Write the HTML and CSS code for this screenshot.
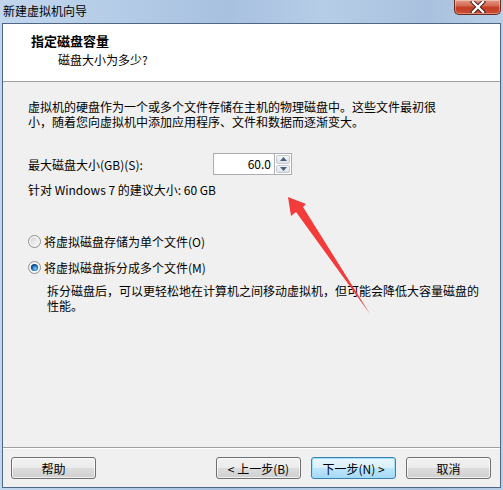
FILE: index.html
```html
<!DOCTYPE html>
<html lang="zh-CN">
<head>
<meta charset="utf-8">
<title>新建虚拟机向导</title>
<link rel="stylesheet" href="styles.css">
</head>
<body>
<div class="window">
  <div class="titlebar">
    <span class="title">新建虚拟机向导</span>
    <div class="close">
      <svg width="16" height="12" viewBox="0 0 16 12"><path d="M3 1 L13 11 M13 1 L3 11" stroke="#3d1a14" stroke-width="4.2" stroke-linecap="square"/><path d="M3 1 L13 11 M13 1 L3 11" stroke="#ffffff" stroke-width="2.4" stroke-linecap="square"/></svg>
    </div>
  </div>
  <div class="client">
    <div class="header">
      <div class="h-title">指定磁盘容量</div>
      <div class="h-sub">磁盘大小为多少?</div>
    </div>
    <div class="body">
      <p class="para">虚拟机的硬盘作为一个或多个文件存储在主机的物理磁盘中。这些文件最初很<br>小，随着您向虚拟机中添加应用程序、文件和数据而逐渐变大。</p>
      <div class="size-row">
        <span class="size-label">最大磁盘大小(GB)(S):</span>
        <div class="spin">
          <div class="spin-input">60.0</div>
          <div class="spin-btns">
            <div class="spin-btn"><svg width="7" height="4" viewBox="0 0 7 4"><path d="M0 4 L3.5 0 L7 4 Z" fill="#4a5f82"/></svg></div>
            <div class="spin-btn"><svg width="7" height="4" viewBox="0 0 7 4"><path d="M0 0 L7 0 L3.5 4 Z" fill="#4a5f82"/></svg></div>
          </div>
        </div>
      </div>
      <div class="rec">针对 Windows 7 的建议大小: 60 GB</div>
      <div class="radio-row first">
        <svg class="radio" width="13" height="13" viewBox="0 0 13 13">
          <defs><linearGradient id="rg1" x1="0" y1="0" x2="1" y2="1"><stop offset="0" stop-color="#d4d4d4"/><stop offset="1" stop-color="#fafafa"/></linearGradient></defs>
          <circle cx="6.5" cy="6.5" r="6" fill="#f4f4f4" stroke="#8e8f8f"/>
          <circle cx="6.5" cy="6.5" r="4" fill="url(#rg1)"/>
        </svg>
        <span>将虚拟磁盘存储为单个文件(O)</span>
      </div>
      <div class="radio-row second">
        <svg class="radio" width="13" height="13" viewBox="0 0 13 13">
          <defs><radialGradient id="rg2" cx="0.6" cy="0.65" r="0.6"><stop offset="0" stop-color="#8fd3fb"/><stop offset="0.5" stop-color="#2a85c9"/><stop offset="1" stop-color="#0b3f74"/></radialGradient></defs>
          <circle cx="6.5" cy="6.5" r="6" fill="#f4f4f4" stroke="#8e8f8f"/>
          <circle cx="6.5" cy="6.5" r="3.6" fill="url(#rg2)"/>
        </svg>
        <span>将虚拟磁盘拆分成多个文件(M)</span>
      </div>
      <p class="desc">拆分磁盘后，可以更轻松地在计算机之间移动虚拟机，但可能会降低大容量磁盘的<br>性能。</p>
    </div>
    <div class="footer">
      <button class="btn help">帮助</button>
      <button class="btn">&lt; 上一步(B)</button>
      <button class="btn default">下一步(N) &gt;</button>
      <button class="btn">取消</button>
    </div>
  </div>
  <svg class="arrow" width="503" height="490" viewBox="0 0 503 490">
    <polygon points="288,197 291,216 296,212 370,314 303,207 306,204" fill="#f43b3b"/>
  </svg>
</div>
</body>
</html>
```
FILE: styles.css
```css
* { box-sizing: border-box; }
html, body {
  margin: 0;
  padding: 0;
  width: 503px;
  height: 490px;
  overflow: hidden;
}
body {
  font-family: "Noto Sans CJK SC", "Liberation Sans", sans-serif;
  font-size: 12px;
  line-height: 15px;
  color: #000;
}
.window {
  position: relative;
  width: 503px;
  height: 490px;
  display: flex;
  flex-direction: column;
  padding: 0 2px 2px 2px;
  background: linear-gradient(to right, #c2d7ee 0%, #b3cbe6 25%, #a8c1df 45%, #b6cde7 65%, #a9c1de 85%, #b9cfe8 100%);
}
.titlebar {
  height: 23px;
  display: flex;
  align-items: flex-start;
  flex-shrink: 0;
}
.title {
  padding-left: 1px;
  padding-top: 3px;
  font-size: 12px;
  line-height: 15px;
  color: #000;
}
.close {
  margin-left: auto;
  width: 47px;
  height: 15px;
  border: 1px solid #6a2a1e;
  border-top: none;
  border-radius: 0 0 5px 5px;
  background: linear-gradient(to bottom, #e39a86 0%, #d46a52 40%, #c03d22 55%, #cf4e33 100%);
  display: flex;
  align-items: center;
  justify-content: center;
  box-shadow: inset 0 0 0 1px rgba(255,255,255,0.35);
}
.client {
  flex: 1;
  display: flex;
  flex-direction: column;
  border: 1px solid #4f6685;
  background: #f0f0f0;
}
.header {
  height: 58px;
  flex-shrink: 0;
  background: #fff;
  border-bottom: 1px solid #a0a0a0;
  padding-top: 9px;
}
.h-title {
  padding-left: 28px;
  font-weight: bold;
  font-size: 13px;
  line-height: 15px;
}
.h-sub {
  padding-left: 55px;
  margin-top: 4px;
}
.body {
  flex: 1;
  padding: 17px 0 0 25px;
}
.para {
  margin: 0;
  white-space: nowrap;
}
.size-row {
  display: flex;
  align-items: center;
  margin-top: 24px;
  height: 22px;
}
.size-label {
  width: 185px;
}
.spin {
  display: flex;
  height: 22px;
}
.spin-input {
  width: 61px;
  height: 22px;
  background: #fff;
  border: 1px solid #abadb3;
  border-right: none;
  text-align: right;
  padding-right: 3px;
  line-height: 20px;
}
.spin-btns {
  width: 18px;
  display: flex;
  flex-direction: column;
  border: 1px solid #abadb3;
  background: #fff;
  padding: 1px;
  gap: 1px;
}
.spin-btn {
  flex: 1;
  border: 1px solid #c3c8d0;
  border-radius: 2px;
  background: linear-gradient(to bottom, #f6f6f6, #dfe2e6);
  display: flex;
  align-items: center;
  justify-content: center;
}
.rec {
  margin-top: 7px;
}
.radio-row {
  display: flex;
  align-items: center;
  height: 15px;
  gap: 3px;
}
.radio-row.first { margin-top: 37px; }
.radio-row.second { margin-top: 11px; }
.radio { flex-shrink: 0; }
.desc {
  margin: 8px 0 0 0;
  padding-left: 19px;
  white-space: nowrap;
}
.footer {
  height: 40px;
  flex-shrink: 0;
  border-top: 1px solid #a0a0a0;
  box-shadow: inset 0 1px 0 #ffffff;
  display: flex;
  align-items: flex-start;
  padding: 9px 9px 0 8px;
  gap: 10px;
}
.btn {
  width: 85px;
  height: 22px;
  font-family: "Noto Sans CJK SC", "Liberation Sans", sans-serif;
  font-size: 12px;
  line-height: 15px;
  color: #000;
  padding: 0;
  border: 1px solid #707070;
  border-radius: 3px;
  background: linear-gradient(to bottom, #f2f2f2 0%, #ebebeb 50%, #dddddd 51%, #cfcfcf 100%);
  box-shadow: inset 0 0 0 1px rgba(255,255,255,0.7);
}
.btn.help { margin-right: auto; }
.btn.default {
  border-color: #3c7fb1;
  background: linear-gradient(to bottom, #eaf6fd 0%, #d9f0fc 50%, #bee6fd 51%, #a7d9f5 100%);
  box-shadow: inset 0 0 0 1px #9ee0fb;
}
.arrow {
  position: absolute;
  left: 0;
  top: 0;
  pointer-events: none;
}
```
